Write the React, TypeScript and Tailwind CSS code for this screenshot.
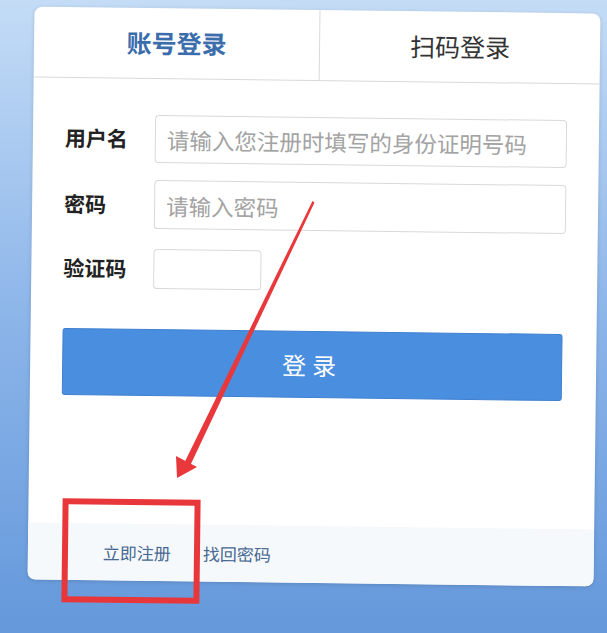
import React from "react";

export default function App() {
  return (
    <div className="relative w-[607px] h-[633px] overflow-hidden bg-gradient-to-b from-[#c4dcf6] via-[#8cb5e9] to-[#6498db] font-['Noto_Sans_CJK_SC','Noto_Sans',sans-serif]">
      <div className="pl-[31px] pt-[10px]">
        <div className="w-[566px] h-[573px] bg-white rounded-[8px] shadow-[0_1px_4px_rgba(0,0,0,0.15)] overflow-hidden flex flex-col rotate-[0.7deg]">
          <div className="flex h-[71px] border-b border-[#d9d9d9] shrink-0">
            <div className="w-[286px] border-r border-[#d9d9d9] flex items-center justify-center text-[25px] font-bold text-[#3b6dac]">
              账号登录
            </div>
            <div className="flex-1 flex items-center justify-center text-[25px] text-[#333]">
              扫码登录
            </div>
          </div>
          <div className="px-[32px] pt-[36px] flex flex-col">
            <div className="flex items-center">
              <div className="w-[90px] text-[21px] font-bold text-[#222]">用户名</div>
              <input
                className="w-[412px] h-[48px] border border-[#d9d9d9] rounded-[4px] px-[11px] text-[22.5px] text-[#333] placeholder:text-[#a3a3a3] outline-none"
                placeholder="请输入您注册时填写的身份证明号码"
              />
            </div>
            <div className="flex items-center mt-[17px]">
              <div className="w-[90px] text-[21px] font-bold text-[#222]">密码</div>
              <input
                className="w-[412px] h-[49px] border border-[#d9d9d9] rounded-[4px] px-[11px] text-[22.5px] text-[#333] placeholder:text-[#a3a3a3] outline-none"
                placeholder="请输入密码"
              />
            </div>
            <div className="flex items-center mt-[20px]">
              <div className="w-[90px] text-[21px] font-bold text-[#222]">验证码</div>
              <input className="w-[108px] h-[40px] border border-[#d9d9d9] rounded-[4px] px-[8px] text-[18px] outline-none" />
            </div>
            <button className="mt-[40px] w-[500px] h-[67px] bg-[#4a8ee0] rounded-[3px] text-white text-[24px] tracking-[6px] border border-[#3f80d0]">
              登录
            </button>
          </div>
          <div className="mt-auto h-[57px] bg-[#f5f9fc] flex items-center pl-[75px] gap-[32px] text-[17px] text-[#486890]">
            <span>立即注册</span>
            <span>找回密码</span>
          </div>
        </div>
      </div>
      <svg className="absolute inset-0 pointer-events-none" width="607" height="633" viewBox="0 0 607 633">
        <polygon points="312.5,201 314.5,202.5 189.5,467 183.5,464.5" fill="#e8383b" />
        <polygon points="177,478 176,456 197,467" fill="#e8383b" />
        <g transform="rotate(0.7 131 551)">
          <rect x="65" y="502" width="132" height="98" fill="none" stroke="#e8373a" strokeWidth="6" />
        </g>
      </svg>
    </div>
  );
}
